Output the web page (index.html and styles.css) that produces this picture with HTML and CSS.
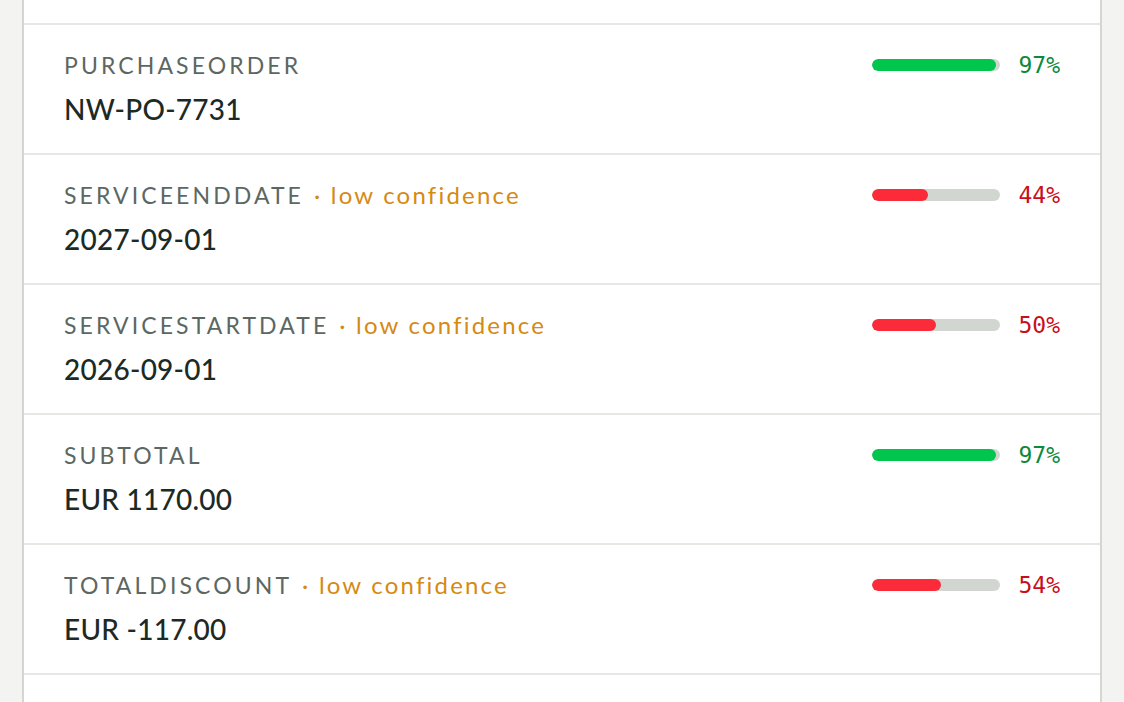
FILE: index.html
```html
<!DOCTYPE html>
<html>
<head>
<meta charset="utf-8">
<link rel="stylesheet" href="styles.css">
</head>
<body>
<div class="card">
  <div class="row row-tail"></div>
  <div class="row">
    <div class="field">
      <div class="label"><span class="name">PurchaseOrder</span></div>
      <div class="value">NW-PO-7731</div>
    </div>
    <div class="conf"><div class="track"><div class="fill good" style="width:97%"></div></div><span class="pct good-t">97%</span></div>
  </div>
  <div class="row">
    <div class="field">
      <div class="label"><span class="name">ServiceEndDate</span><span class="warn">· low confidence</span></div>
      <div class="value">2027-09-01</div>
    </div>
    <div class="conf"><div class="track"><div class="fill bad" style="width:44%"></div></div><span class="pct bad-t">44%</span></div>
  </div>
  <div class="row">
    <div class="field">
      <div class="label"><span class="name">ServiceStartDate</span><span class="warn">· low confidence</span></div>
      <div class="value">2026-09-01</div>
    </div>
    <div class="conf"><div class="track"><div class="fill bad" style="width:50%"></div></div><span class="pct bad-t">50%</span></div>
  </div>
  <div class="row">
    <div class="field">
      <div class="label"><span class="name">Subtotal</span></div>
      <div class="value">EUR 1170.00</div>
    </div>
    <div class="conf"><div class="track"><div class="fill good" style="width:97%"></div></div><span class="pct good-t">97%</span></div>
  </div>
  <div class="row">
    <div class="field">
      <div class="label"><span class="name">TotalDiscount</span><span class="warn">· low confidence</span></div>
      <div class="value">EUR -117.00</div>
    </div>
    <div class="conf"><div class="track"><div class="fill bad" style="width:54%"></div></div><span class="pct bad-t">54%</span></div>
  </div>
  <div class="row row-next"></div>
</div>
</body>
</html>
```
FILE: styles.css
```css
html, body {
  margin: 0;
  padding: 0;
  background: #f3f3f1;
  height: 702px;
  overflow: hidden;
}
body {
  font-family: "Lato", "DejaVu Sans", sans-serif;
}
.card {
  margin: 0 22px;
  width: 1076px;
  background: #ffffff;
  border-left: 2px solid #d3d6d1;
  border-right: 2px solid #d3d6d1;
  height: 702px;
  overflow: hidden;
}
.row {
  display: flex;
  justify-content: space-between;
  align-items: flex-start;
  height: 130px;
  box-sizing: border-box;
  padding: 25px 40px 0 40px;
  border-bottom: 2px solid #e6e8e3;
}
.row-tail {
  height: 25px;
  padding: 0;
}
.row-next {
  border-bottom: none;
}
.field {
  display: flex;
  flex-direction: column;
  gap: 11px;
}
.label {
  display: flex;
  align-items: baseline;
  gap: 10px;
  font-size: 23px;
  line-height: 30px;
}
.name {
  text-transform: uppercase;
  color: #5c6762;
  letter-spacing: 3.1px;
}
.warn {
  color: #d58a12;
  font-size: 24px;
  letter-spacing: 2.2px;
}
.value {
  font-size: 28px;
  line-height: 36px;
  font-weight: 500;
  color: #1c2a25;
  letter-spacing: 0.25px;
}
.conf {
  display: flex;
  align-items: center;
  gap: 16px;
  height: 30px;
}
.track {
  width: 128px;
  height: 12px;
  border-radius: 6px;
  background: #d2d6d1;
  overflow: hidden;
}
.fill {
  height: 100%;
  border-radius: 6px;
}
.good { background: #00c64e; }
.bad { background: #fc2b39; }
.pct {
  font-family: "DejaVu Sans Mono", monospace;
  font-size: 23px;
  min-width: 44px;
  text-align: right;
}
.good-t { color: #0b8a3e; }
.bad-t { color: #c80f1b; }
```
